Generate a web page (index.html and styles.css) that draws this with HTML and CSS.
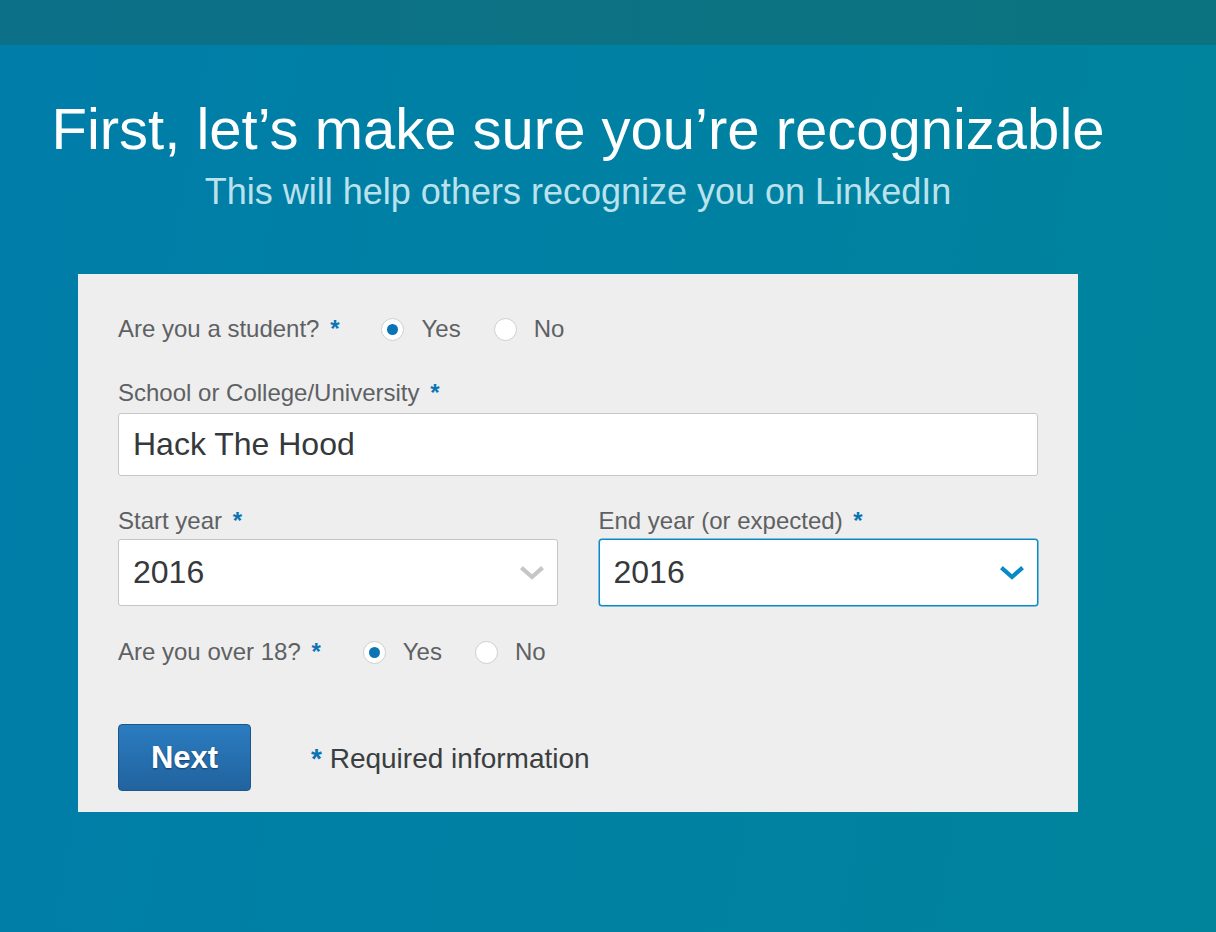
FILE: index.html
```html
<!DOCTYPE html>
<html lang="en">
<head>
<meta charset="utf-8">
<title>First, let's make sure you're recognizable</title>
<link rel="stylesheet" href="styles.css">
</head>
<body>
<div class="topbar"></div>
<main class="page">
  <header class="intro">
    <h1 class="title">First, let’s make sure you’re recognizable</h1>
    <p class="subtitle">This will help others recognize you on LinkedIn</p>
  </header>
  <form class="card">
    <div class="radio-row">
      <span class="question">Are you a student? <span class="req">*</span></span>
      <label class="option"><span class="radio checked"></span>Yes</label>
      <label class="option"><span class="radio"></span>No</label>
    </div>

    <div class="field field-school">
      <div class="label">School or College/University <span class="req">*</span></div>
      <div class="input">Hack The Hood</div>
    </div>

    <div class="years">
      <div class="field">
        <div class="label">Start year <span class="req">*</span></div>
        <div class="select">
          <span>2016</span>
          <svg class="chev" width="24" height="16" viewBox="0 0 24 16"><path d="M3 4 L12 12 L21 4" fill="none" stroke="#c6c6c6" stroke-width="4.2" stroke-linecap="square" stroke-linejoin="miter"/></svg>
        </div>
      </div>
      <div class="field">
        <div class="label">End year (or expected) <span class="req">*</span></div>
        <div class="select focused">
          <span>2016</span>
          <svg class="chev" width="24" height="16" viewBox="0 0 24 16"><path d="M3 4 L12 12 L21 4" fill="none" stroke="#0a89c8" stroke-width="4.2" stroke-linecap="square" stroke-linejoin="miter"/></svg>
        </div>
      </div>
    </div>

    <div class="radio-row radio-row-adult">
      <span class="question">Are you over 18? <span class="req">*</span></span>
      <label class="option"><span class="radio checked"></span>Yes</label>
      <label class="option"><span class="radio"></span>No</label>
    </div>

    <div class="actions">
      <button type="button" class="next">Next</button>
      <span class="required-note"><span class="req">*</span> Required information</span>
    </div>
  </form>
</main>
</body>
</html>
```

FILE: styles.css
```css
* { box-sizing: border-box; }
html, body { margin: 0; padding: 0; }
body {
  width: 1216px;
  height: 932px;
  overflow: hidden;
  font-family: "Liberation Sans", Arial, Helvetica, sans-serif;
  background: linear-gradient(100deg, #007da9 0%, #0081a2 55%, #00849c 100%);
}
.topbar {
  height: 45px;
  background: linear-gradient(90deg, #0c7088 0%, #0c7383 60%, #0b737f 100%);
}
.page {
  width: 1000px;
  margin-left: 78px;
}
.intro {
  display: flex;
  flex-direction: column;
  align-items: center;
  padding-top: 51px;
  height: 229px;
}
.title {
  margin: 0;
  white-space: nowrap;
  color: #fff;
  font-weight: normal;
  font-size: 58px;
  line-height: 66px;
}
.subtitle {
  margin: 0;
  white-space: nowrap;
  color: #bbe2ec;
  font-size: 36px;
  line-height: 40px;
  margin-top: 10px;
}
.card {
  background: #eeeeee;
  padding: 35px 40px 21px 40px;
  color: #5e6163;
}
.req { color: #0a74b5; font-weight: bold; }
.radio-row {
  display: flex;
  align-items: center;
  height: 40px;
  font-size: 24px;
}
.question { margin-right: 42px; }
.question .req { margin-left: 4px; }
.option {
  display: flex;
  align-items: center;
  margin-right: 33px;
}
.radio {
  width: 23px;
  height: 23px;
  border-radius: 50%;
  background: #fff;
  border: 1px solid #cfcfcf;
  margin-right: 17px;
  display: flex;
  align-items: center;
  justify-content: center;
}
.radio.checked::after {
  content: "";
  width: 11px;
  height: 11px;
  border-radius: 50%;
  background: #0a74b5;
}
.label {
  font-size: 24px;
  line-height: 26px;
}
.label .req { margin-left: 4px; }
.field-school { margin-top: 31px; }
.input, .select {
  background: #fff;
  border: 1px solid #c7c7c7;
  border-radius: 3px;
  color: #36393b;
  font-size: 32px;
  padding: 0 14px;
  display: flex;
  align-items: center;
}
.input { height: 63px; margin-top: 7px; }
.years {
  display: flex;
  gap: 41px;
  margin-top: 32px;
}
.years .field { flex: 1; }
.select {
  height: 67px;
  margin-top: 5px;
  justify-content: space-between;
  padding-right: 13px;
  border-color: #c5c5c5;
}
.select.focused {
  border-color: #0a89c8;
  box-shadow: 0 0 0 0.5px #0a89c8;
}
.chev { display: block; }
.radio-row-adult { margin-top: 26px; }
.actions {
  display: flex;
  align-items: center;
  margin-top: 52px;
}
.next {
  width: 133px;
  height: 67px;
  border: 1px solid #1c578a;
  border-radius: 4px;
  background: linear-gradient(180deg, #2b7cc0 0%, #21639f 100%);
  color: #fff;
  font-family: "Liberation Sans", Arial, Helvetica, sans-serif;
  font-weight: bold;
  font-size: 31px;
  text-shadow: 0 1px 2px rgba(0, 0, 0, 0.45);
  padding: 0;
  margin-right: 60px;
}
.required-note {
  color: #3b3e40;
  font-size: 28px;
  margin-top: 2px;
}
```
